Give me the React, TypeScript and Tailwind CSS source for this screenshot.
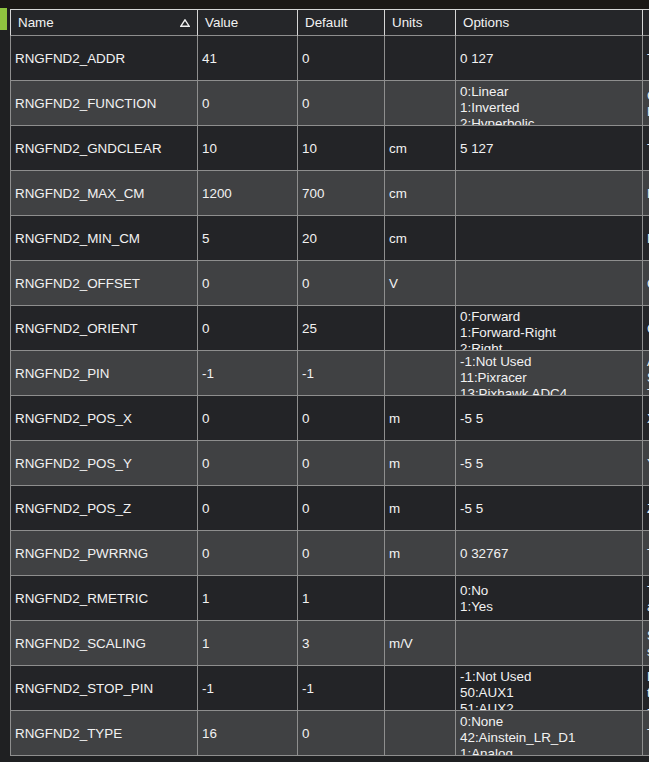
type Row = {
  name: string
  value: string
  def: string
  units: string
  options: string[]
  desc: string[]
}

const rows: Row[] = [
  { name: 'RNGFND2_ADDR', value: '41', def: '0', units: '', options: ['0 127'], desc: ['This sets the bus address of the sensor, where applicable.'] },
  { name: 'RNGFND2_FUNCTION', value: '0', def: '0', units: '', options: ['0:Linear', '1:Inverted', '2:Hyperbolic'], desc: ['Control over what function is used to calculate distance.', 'Hyperbolic: distance = scaling/(voltage-offset).'] },
  { name: 'RNGFND2_GNDCLEAR', value: '10', def: '10', units: 'cm', options: ['5 127'], desc: ['This parameter sets the expected range measurement on ground.'] },
  { name: 'RNGFND2_MAX_CM', value: '1200', def: '700', units: 'cm', options: [], desc: ['Maximum distance in centimeters that rangefinder can reliably read'] },
  { name: 'RNGFND2_MIN_CM', value: '5', def: '20', units: 'cm', options: [], desc: ['Minimum distance in centimeters that rangefinder can reliably read'] },
  { name: 'RNGFND2_OFFSET', value: '0', def: '0', units: 'V', options: [], desc: ['Offset in volts for zero distance for analog rangefinders.'] },
  { name: 'RNGFND2_ORIENT', value: '0', def: '25', units: '', options: ['0:Forward', '1:Forward-Right', '2:Right'], desc: ['Orientation of rangefinder'] },
  { name: 'RNGFND2_PIN', value: '-1', def: '-1', units: '', options: ['-1:Not Used', '11:Pixracer', '13:Pixhawk ADC4'], desc: ['Analog or PWM input pin that rangefinder is connected to.', 'Set to -1 to disable, or to the pin number.', 'The pin numbers depend on the board.'] },
  { name: 'RNGFND2_POS_X', value: '0', def: '0', units: 'm', options: ['-5 5'], desc: ['X position of the rangefinder in body frame.'] },
  { name: 'RNGFND2_POS_Y', value: '0', def: '0', units: 'm', options: ['-5 5'], desc: ['Y position of the rangefinder in body frame.'] },
  { name: 'RNGFND2_POS_Z', value: '0', def: '0', units: 'm', options: ['-5 5'], desc: ['Z position of the rangefinder in body frame.'] },
  { name: 'RNGFND2_PWRRNG', value: '0', def: '0', units: 'm', options: ['0 32767'], desc: ['This parameter sets the estimated terrain distance in meters.'] },
  { name: 'RNGFND2_RMETRIC', value: '1', def: '1', units: '', options: ['0:No', '1:Yes'], desc: ['This parameter sets whether an analog rangefinder is ratiometric.', 'analog rangefinders are normally ratiometric.'] },
  { name: 'RNGFND2_SCALING', value: '1', def: '3', units: 'm/V', options: [], desc: ['Scaling factor between rangefinder reading and distance.', 'scaling in meters per volt.'] },
  { name: 'RNGFND2_STOP_PIN', value: '-1', def: '-1', units: '', options: ['-1:Not Used', '50:AUX1', '51:AUX2'], desc: ['Digital pin that enables/disables rangefinder measurement.', 'this pin is held high or low.', '-1 disables the stop pin.'] },
  { name: 'RNGFND2_TYPE', value: '16', def: '0', units: '', options: ['0:None', '42:Ainstein_LR_D1', '1:Analog'], desc: ['Type of connected rangefinder'] },
]

function Cell({ lines, first, className = '' }: { lines: string[]; first?: boolean; className?: string }) {
  // 3+ lines overflow the row: the grid shows them from the top and clips
  const top = lines.length > 2
  return (
    <div
      className={`h-[45px] overflow-hidden border-b border-r border-[#8e8e8e] pl-[4px] pr-1 ${
        first ? 'border-l' : ''
      } ${top ? 'pt-[3px]' : 'flex flex-col justify-center pt-[2px]'} ${className}`}
    >
      {lines.map((l, i) => (
        <div key={i} className="whitespace-nowrap">
          {l}
        </div>
      ))}
    </div>
  )
}

function Head({ label, first, sort }: { label: string; first?: boolean; sort?: boolean }) {
  return (
    <div
      className={`flex h-[27px] items-center justify-between border-t border-r border-b border-t-[#d6d6d6] border-r-[#d6d6d6] border-b-[#8e8e8e] bg-[#252629] pl-[7px] pt-[1px] ${
        first ? 'border-l border-l-[#d6d6d6]' : ''
      }`}
    >
      <span>{label}</span>
      {sort && (
        <svg width="10" height="8" viewBox="0 0 10 8" className="mr-[7px]">
          <path d="M5 0.8 L9.2 7.2 L0.8 7.2 Z" fill="none" stroke="#f0f0f0" strokeWidth="1.4" />
        </svg>
      )}
    </div>
  )
}

export default function App() {
  return (
    <div className="h-[762px] w-[649px] overflow-hidden bg-[#1f2022] font-['Liberation_Sans',Arial,sans-serif] text-[13.4px] leading-[16px] text-[#f2f2f2]">
      {/* title strip */}
      <div className="h-[9px] bg-[#1b1816]" />
      <div className="flex">
        {/* left gutter with the green tab */}
        <div className="w-[10px] shrink-0">
          <div className="-mt-[1px] h-[22px] w-[7px] bg-[#8fc43f]" />
        </div>
        <div className="grid shrink-0 grid-cols-[188px_100px_87px_71px_187px_300px]">
          <Head label="Name" first sort />
          <Head label="Value" />
          <Head label="Default" />
          <Head label="Units" />
          <Head label="Options" />
          <Head label="" />
          {rows.map((r, i) => {
            const bg = i % 2 === 0 ? 'bg-[#232427]' : 'bg-[#404143]'
            return [
              <Cell key={r.name + 'n'} lines={[r.name]} first className={bg} />,
              <Cell key={r.name + 'v'} lines={[r.value]} className={bg} />,
              <Cell key={r.name + 'd'} lines={[r.def]} className={bg} />,
              <Cell key={r.name + 'u'} lines={[r.units]} className={bg} />,
              <Cell key={r.name + 'o'} lines={r.options} className={bg} />,
              <Cell key={r.name + 'x'} lines={r.desc} className={`${bg} pl-[3px]`} />,
            ]
          })}
        </div>
      </div>
    </div>
  )
}
